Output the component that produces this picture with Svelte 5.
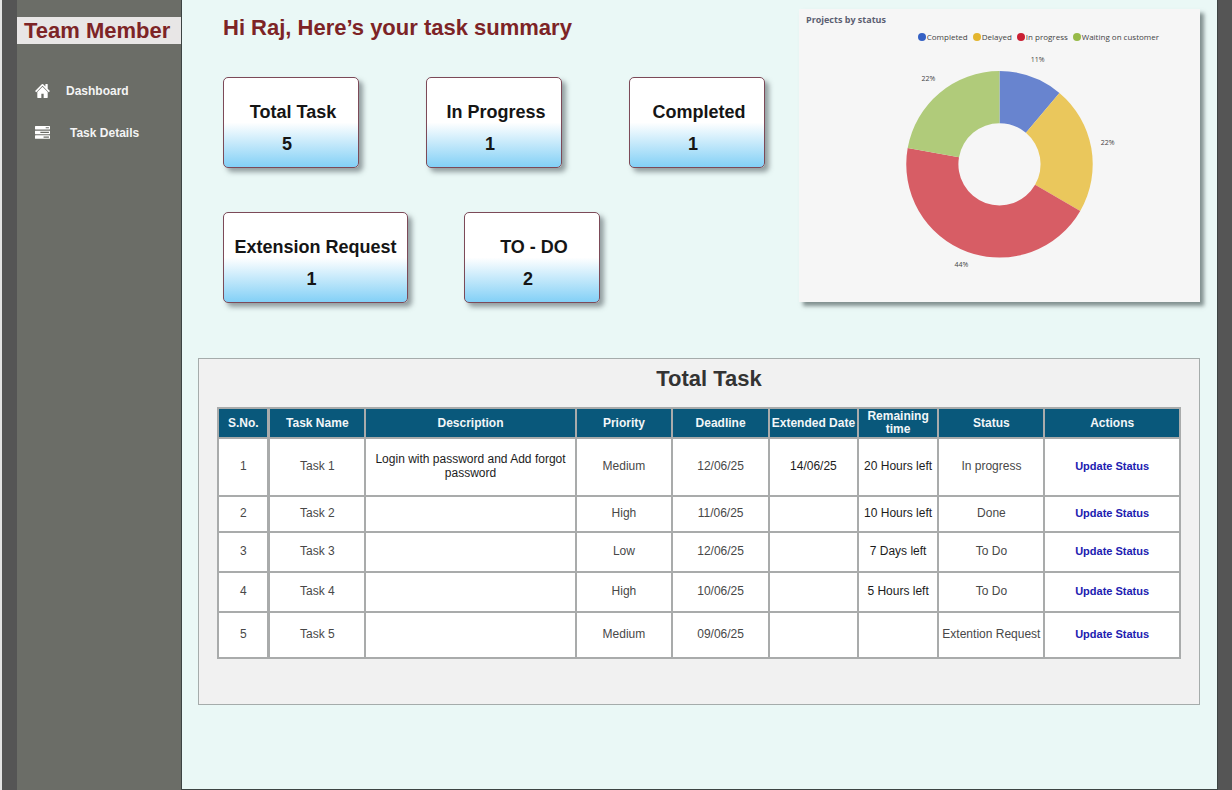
<script>
  const summary = [
    [
      { label: 'Total Task', value: 5 },
      { label: 'In Progress', value: 1 },
      { label: 'Completed', value: 1 }
    ],
    [
      { label: 'Extension Request', value: 1, wide: true },
      { label: 'TO - DO', value: 2 }
    ]
  ];

  const statuses = [
    { name: 'Completed', dot: '#3561c4', fill: '#6884cf', share: 1, label: '11%', x: 238, y: 19 },
    { name: 'Delayed', dot: '#e3b52e', fill: '#eac75c', share: 2, label: '22%', x: 308, y: 102 },
    { name: 'In progress', dot: '#ca1f33', fill: '#d75d65', share: 4, label: '44%', x: 162, y: 223 },
    { name: 'Waiting on customer', dot: '#97ba48', fill: '#b0cb7a', share: 2, label: '22%', x: 129, y: 38 }
  ];

  const center = { x: 200, y: 121 };
  const outer = 93;
  const inner = 41;
  const total = statuses.reduce((sum, s) => sum + s.share, 0);

  function point(radius, turn) {
    const angle = turn * 2 * Math.PI;
    const x = center.x + radius * Math.sin(angle);
    const y = center.y - radius * Math.cos(angle);
    return `${x.toFixed(2)} ${y.toFixed(2)}`;
  }

  let used = 0;
  const slices = statuses.map((s) => {
    const from = used / total;
    used += s.share;
    const to = used / total;
    const d = `M${point(outer, from)}A${outer} ${outer} 0 0 1 ${point(outer, to)}L${point(inner, to)}A${inner} ${inner} 0 0 0 ${point(inner, from)}Z`;
    return { ...s, d };
  });

  const tasks = [
    { name: 'Task 1', description: 'Login with password and Add forgot password', priority: 'Medium', deadline: '12/06/25', extended: '14/06/25', remaining: '20 Hours left', status: 'In progress' },
    { name: 'Task 2', description: '', priority: 'High', deadline: '11/06/25', extended: '', remaining: '10 Hours left', status: 'Done' },
    { name: 'Task 3', description: '', priority: 'Low', deadline: '12/06/25', extended: '', remaining: '7 Days left', status: 'To Do' },
    { name: 'Task 4', description: '', priority: 'High', deadline: '10/06/25', extended: '', remaining: '5 Hours left', status: 'To Do' },
    { name: 'Task 5', description: '', priority: 'Medium', deadline: '09/06/25', extended: '', remaining: '', status: 'Extention Request' }
  ];
</script>

<div class="app">
  <aside class="sidebar">
    <div class="role">Team Member</div>
    <nav>
      <a href="#dashboard">
        <svg viewBox="64 253 1664 1283" preserveAspectRatio="none" aria-hidden="true"><path d="M1472 992v480q0 26-19 45t-45 19h-384v-384h-256v384h-384q-26 0-45-19t-19-45v-480q0-1 .5-3t.5-3l575-474 575 474q1 2 1 6zm223-69l-62 74q-8 9-21 11h-3q-13 0-21-7l-692-577-692 577q-12 8-24 7-13-2-21-11l-62-74q-8-10-7-23.500t11-21.500l719-599q32-26 76-26t76 26l244 204v-195q0-14 9-23t23-9h192q14 0 23 9t9 23v408l219 182q10 8 11 21.500t-7 23.500z" /></svg>
        <span>Dashboard</span>
      </a>
      <a href="#task-details" class="indented">
        <svg viewBox="0 128 1792 1536" preserveAspectRatio="none" aria-hidden="true"><path d="M1024 1408h640v-128h-640v128zm-384-512h1024v-128h-1024v128zm640-512h384v-128h-384v128zm512 832v256q0 26-19 45t-45 19h-1664q-26 0-45-19t-19-45v-256q0-26 19-45t45-19h1664q26 0 45 19t19 45zm0-512v256q0 26-19 45t-45 19h-1664q-26 0-45-19t-19-45v-256q0-26 19-45t45-19h1664q26 0 45 19t19 45zm0-512v256q0 26-19 45t-45 19h-1664q-26 0-45-19t-19-45v-256q0-26 19-45t45-19h1664q26 0 45 19t19 45z" /></svg>
        <span>Task Details</span>
      </a>
    </nav>
  </aside>

  <main>
    <div class="top">
      <section class="summary">
        <h1>Hi Raj, Here’s your task summary</h1>
        {#each summary as row}
          <div class="cards">
            {#each row as card}
              <article class="card" class:wide={card.wide}>
                <span class="label">{card.label}</span>
                <span class="value">{card.value}</span>
              </article>
            {/each}
          </div>
        {/each}
      </section>

      <section class="chart">
        <h2>Projects by status</h2>
        <ul>
          {#each statuses as s}
            <li><i style="background:{s.dot}"></i>{s.name}</li>
          {/each}
        </ul>
        <svg viewBox="0 0 400 258" role="img" aria-label="Projects by status">
          {#each slices as slice}
            <path d={slice.d} fill={slice.fill} />
            <text x={slice.x} y={slice.y}>{slice.label}</text>
          {/each}
        </svg>
      </section>
    </div>

    <section class="tasks">
      <h2>Total Task</h2>
      <table>
        <colgroup>
          <col class="c-no" /><col class="c-name" /><col class="c-desc" /><col class="c-prio" /><col class="c-dead" />
          <col class="c-ext" /><col class="c-rem" /><col class="c-stat" /><col class="c-act" />
        </colgroup>
        <thead>
          <tr>
            <th>S.No.</th>
            <th>Task Name</th>
            <th>Description</th>
            <th>Priority</th>
            <th>Deadline</th>
            <th>Extended Date</th>
            <th>Remaining time</th>
            <th>Status</th>
            <th>Actions</th>
          </tr>
        </thead>
        <tbody>
          {#each tasks as task, i}
            <tr>
              <td>{i + 1}</td>
              <td>{task.name}</td>
              <td class="strong">{task.description}</td>
              <td>{task.priority}</td>
              <td>{task.deadline}</td>
              <td class="strong">{task.extended}</td>
              <td class="strong">{task.remaining}</td>
              <td>{task.status}</td>
              <td><a href="#update-{i + 1}">Update Status</a></td>
            </tr>
          {/each}
        </tbody>
      </table>
    </section>
  </main>
</div>

<style>
  :global(body) {
    margin: 0;
    font-family: 'Liberation Sans', Arial, sans-serif;
  }

  .app {
    box-sizing: border-box;
    display: grid;
    grid-template-columns: 164px 1fr;
    min-height: 100vh;
    padding: 0 14px 0 15px;
    border-left: 2px solid #e4e4e4;
    background: #555;
  }

  .sidebar {
    padding-top: 17px;
    background: #6b6d67;
  }

  .role {
    padding-left: 7px;
    background: #e8e6e6;
    color: #7d2426;
    font-size: 22px;
    font-weight: bold;
    line-height: 27px;
    white-space: nowrap;
  }

  nav {
    display: flex;
    flex-direction: column;
    gap: 22px;
    padding: 37px 0 0 18px;
  }

  nav a {
    display: flex;
    align-items: center;
    gap: 16px;
    color: #f4f4f4;
    font-size: 12px;
    font-weight: bold;
    line-height: 20px;
    text-decoration: none;
  }

  nav a.indented {
    gap: 20px;
  }

  nav svg {
    width: 15px;
    height: 14px;
    fill: #fff;
  }

  main {
    box-sizing: border-box;
    padding: 9px 17px 0 16px;
    border: solid #3d4443;
    border-width: 0 1px 1px;
    background: #eaf8f6;
  }

  .top {
    display: grid;
    grid-template-columns: 1fr 401px;
    align-items: start;
  }

  .summary {
    padding-left: 25px;
  }

  h1 {
    margin: 0 0 30px;
    color: #7d2426;
    font-size: 22px;
    line-height: 38px;
  }

  .cards {
    display: flex;
    gap: 67px;
    margin-bottom: 44px;
  }

  .cards + .cards {
    gap: 56px;
    margin-bottom: 0;
  }

  .card {
    box-sizing: border-box;
    display: flex;
    flex-direction: column;
    width: 136px;
    height: 91px;
    padding-top: 24px;
    border: 1px solid #7c4a58;
    border-radius: 5px;
    background: linear-gradient(#fff 50%, #83d0f6);
    box-shadow: 4px 4px 5px rgba(60, 70, 75, 0.5);
    color: #151515;
    font-size: 18px;
    font-weight: bold;
    line-height: 20px;
    text-align: center;
    white-space: nowrap;
  }

  .card.wide {
    width: 185px;
  }

  .label {
    padding-left: 4px;
  }

  .wide .label {
    padding-left: 0;
  }

  .value {
    margin-top: 12px;
    padding-right: 8px;
  }

  .chart {
    background: #f6f6f6;
    box-shadow: 4px 4px 4px rgba(60, 75, 75, 0.6);
    color: #444;
    font-family: 'Open Sans', sans-serif;
  }

  .chart h2 {
    margin: 0;
    padding: 3px 0 0 7px;
    color: #5c5f72;
    font-size: 9px;
    line-height: 16px;
  }

  .chart ul {
    display: flex;
    gap: 5px;
    justify-content: flex-end;
    margin: 0;
    padding: 3px 41px 0 0;
    list-style: none;
    font-size: 8px;
    line-height: 12px;
  }

  .chart li {
    display: flex;
    align-items: center;
    gap: 1px;
  }

  .chart i {
    width: 8px;
    height: 8px;
    border-radius: 50%;
  }

  .chart svg {
    display: block;
    width: 100%;
  }

  .chart text {
    fill: #444;
    font-size: 7px;
    text-anchor: middle;
  }

  .tasks {
    margin-top: 55px;
    padding: 0 18px 45px;
    border: 1px solid #a5acab;
    background: #f1f1f1;
  }

  .tasks h2 {
    margin: 0;
    padding: 5px 0 13px 20px;
    color: #333;
    font-size: 22px;
    line-height: 30px;
    text-align: center;
  }

  table {
    width: 100%;
    border-collapse: collapse;
    table-layout: fixed;
    background: #fff;
    color: #484848;
    font-size: 12px;
    line-height: 14px;
    text-align: center;
  }

  .c-no { width: 5.3%; }
  .c-name { width: 10%; }
  .c-desc { width: 21.9%; }
  .c-prio { width: 10%; }
  .c-dead { width: 10.1%; }
  .c-ext { width: 9.2%; }
  .c-rem { width: 8.4%; }
  .c-stat { width: 11%; }
  .c-act { width: 14.1%; }

  th,
  td {
    padding: 0;
    border: 2px solid #a9abab;
  }

  th:first-child,
  td:first-child {
    border-right-width: 3px;
  }

  th {
    height: 28px;
    background: #09587b;
    color: #f2f6f8;
    line-height: 13px;
  }

  td {
    height: 38px;
    padding-bottom: 2px;
  }

  tbody tr:nth-child(1) td { height: 54px; }
  tbody tr:nth-child(2) td { height: 32px; }
  tbody tr:nth-child(3) td,
  tbody tr:nth-child(4) td { height: 36px; }
  tbody tr:nth-child(5) td { height: 42px; }

  .strong {
    color: #1c1c1c;
  }

  td a {
    color: #2020b0;
    font-size: 11px;
    font-weight: bold;
    text-decoration: none;
  }
</style>
